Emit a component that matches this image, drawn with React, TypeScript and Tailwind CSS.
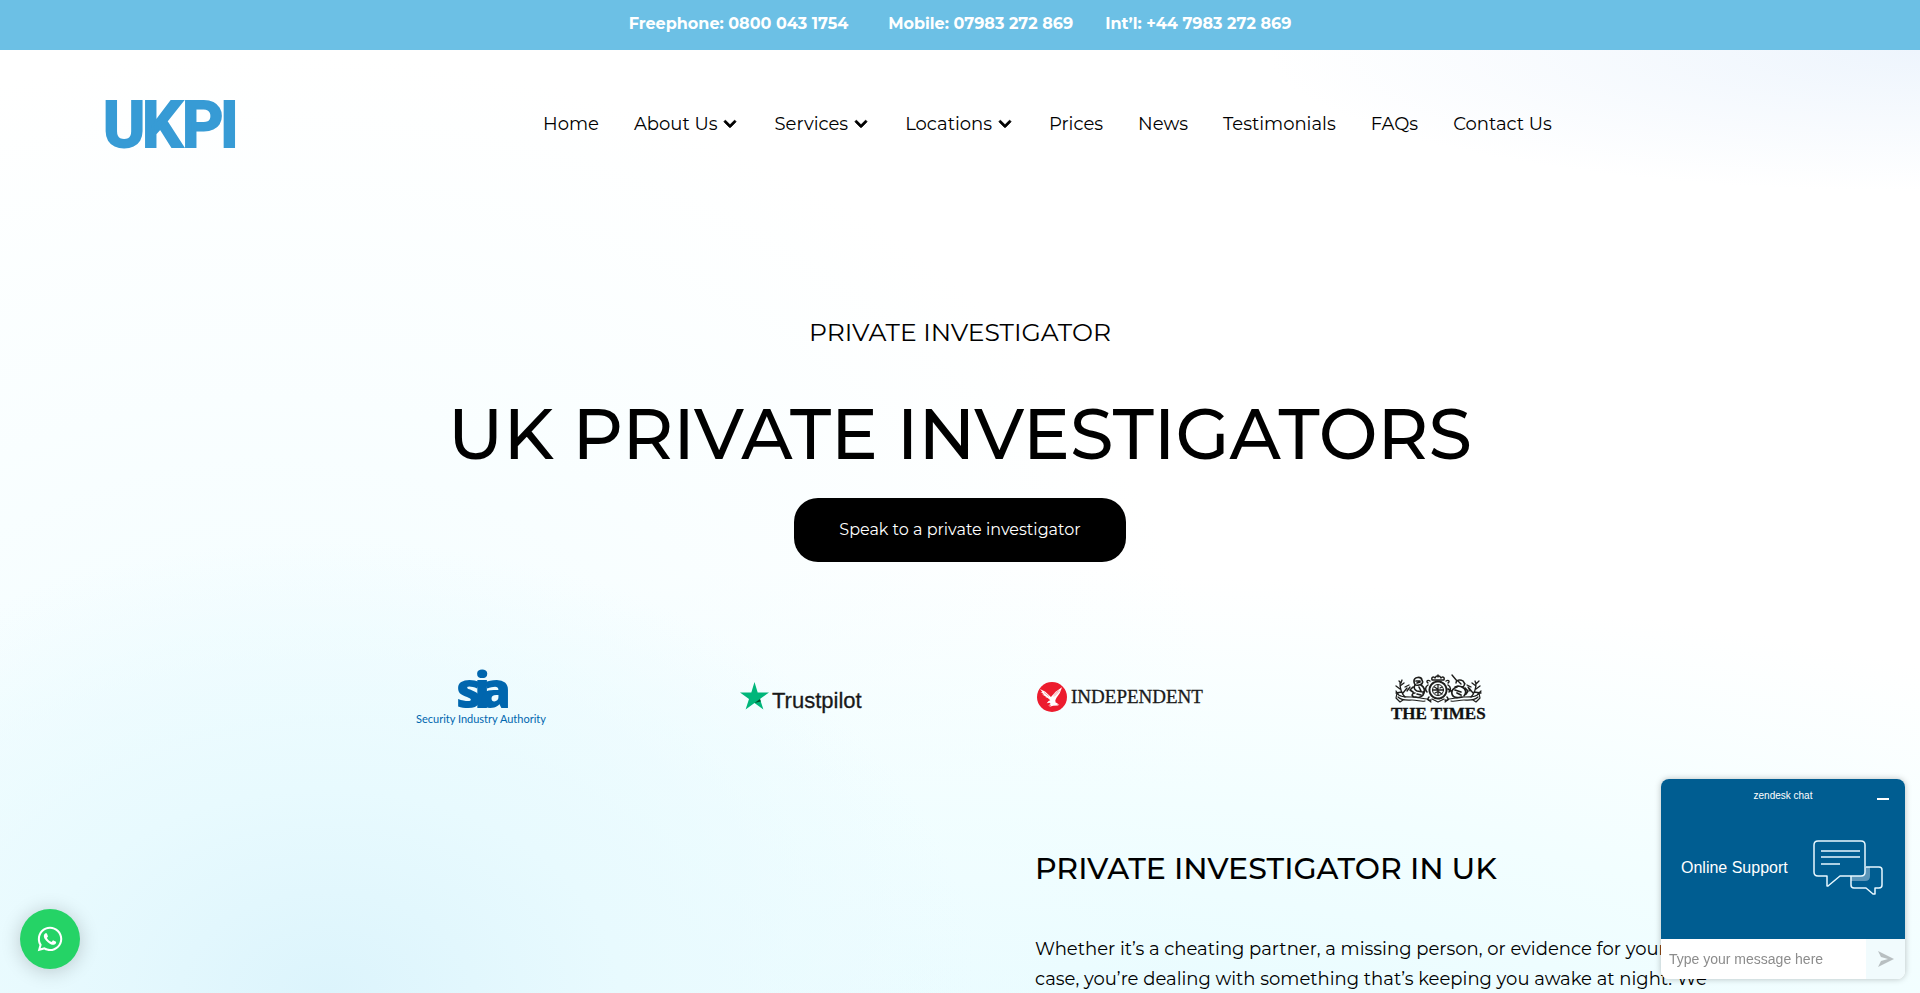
import { FaChevronDown, FaWhatsapp } from "react-icons/fa";

const links = [
  { label: "Home" },
  { label: "About Us", menu: true },
  { label: "Services", menu: true },
  { label: "Locations", menu: true },
  { label: "Prices" },
  { label: "News" },
  { label: "Testimonials" },
  { label: "FAQs" },
  { label: "Contact Us" },
];

function TopBar() {
  return (
    <div className="bg-[#6cc0e5] h-[50px] pb-0.5 flex items-center justify-center gap-8 text-white text-base font-bold">
      <a href="tel:08000431754" className="mr-2">
        Freephone: 0800 043 1754
      </a>
      <a href="tel:07983272869">Mobile: 07983 272 869</a>
      <a href="tel:+447983272869">Int’l: +44 7983 272 869</a>
    </div>
  );
}

function Logo() {
  return (
    <svg width="132" height="52" viewBox="0 0 132 52" className="overflow-visible" role="img" aria-label="UKPI">
      <text
        x="-2 37 77 115"
        y="49"
        fill="#379bd5"
        stroke="#379bd5"
        strokeWidth="2"
        className="font-[Roboto,sans-serif] font-bold text-[64px]"
      >
        UKPI
      </text>
    </svg>
  );
}

function Navigation() {
  return (
    <header className="h-[150px] px-[105px] pb-0.5 flex items-center">
      <a href="#home" className="w-[438px] shrink-0">
        <Logo />
      </a>
      <nav className="flex items-center gap-[35px] text-lg text-black">
        {links.map((link) => (
          <a key={link.label} href="#" className="flex items-center gap-1.5 whitespace-nowrap">
            {link.label}
            {link.menu && <FaChevronDown stroke="currentColor" strokeWidth="30" className="size-3.5 mr-0.5" />}
          </a>
        ))}
      </nav>
    </header>
  );
}

function Hero() {
  return (
    <section className="pt-28 flex flex-col items-center text-black">
      <p className="text-[25px] leading-10">PRIVATE INVESTIGATOR</p>
      <h1 className="mt-[38px] text-[70px] leading-[88px] font-medium whitespace-nowrap">
        UK PRIVATE INVESTIGATORS
      </h1>
      <button className="mt-5 h-16 px-[45px] rounded-3xl bg-black text-white text-base">
        Speak to a private investigator
      </button>
    </section>
  );
}

function SiaLogo() {
  return (
    <svg width="140" height="60" viewBox="0 0 140 60" className="overflow-visible" role="img" aria-label="Security Industry Authority">
      <g fill="#0066ae">
        <text
          x="43 61 67"
          y="41"
          className="font-['Open_Sans',sans-serif] font-extrabold text-[50px]"
        >
          sia
        </text>
        <text x="3" y="56" className="font-[Lato,sans-serif] text-[11px]">
          Security Industry Authority
        </text>
      </g>
    </svg>
  );
}

function TrustpilotLogo() {
  return (
    <svg width="124" height="32" viewBox="0 0 124 32" className="overflow-visible" role="img" aria-label="Trustpilot">
      <path d="M14.500 1l3.200 10.500H29l-9 6.500 3.400 10.500-8.900-6.500-8.900 6.500L9 18l-9-6.500h11.300z" fill="#00b67a" />
      <path d="M20.800 20.500l-.8-2.500-5.500 4z" fill="#005128" />
      <text x="32" y="27" fill="#191919" stroke="#191919" strokeWidth="0.3" className="font-['Liberation_Sans',sans-serif] text-[22px]">
        Trustpilot
      </text>
    </svg>
  );
}

function IndependentLogo() {
  return (
    <svg width="166" height="30" viewBox="0 0 166 30" className="overflow-visible" role="img" aria-label="Independent">
      <circle cx="15" cy="15" r="15" fill="#ec1c2e" />
      <path
        d="M3 7l5 2.500 3.600 3.300 2.300 2.200 1.400-1.600 3.300-3.600L25 5.300l-1.200 3.200-1 2.500-1.700 2.500-1.600 2.200-1.200 2.600.3 2.200 2.600 1-1.600.6 2.700.6-1.500.9-4.700.2-4.100 1.200 2.200-1.800-3.200.3 2.700-1.600-1.300-1.200-2.700.6 1.900-2.300 1.700-.8-2.500-2.200-3-1.200 1.700-.1L5 12.600l2.200-.2L3.600 10l2 .2z"
        fill="#fff"
      />
      <path d="M17 14.500l6-6M16.500 13l5-4.500M7 10.500l5 4" stroke="#ec1c2e" strokeWidth="0.4" />
      <text x="34" y="21" fill="#1a1a1a" stroke="#1a1a1a" strokeWidth="0.3" className="font-['Liberation_Serif',serif] text-[19px]">
        INDEPENDENT
      </text>
    </svg>
  );
}

function TimesLogo() {
  return (
    <svg width="96" height="48" viewBox="0 0 96 48" className="overflow-visible" role="img" aria-label="The Times">
      <g fill="none" stroke="#1d1d1b" strokeLinecap="round" strokeLinejoin="round">
        {/* shield and crown */}
        <circle cx="47" cy="17" r="8.500" strokeWidth="2" strokeDasharray="1.500 0.700" />
        <circle cx="47" cy="17" r="5.500" strokeWidth="1" />
        <path d="M42 17h10M47 12v10M43.500 14l3 2M48 19l3 2M44 20l2-1M49 15l2-1" strokeWidth="1.300" />
        <path d="M41 7c-1-3 2-4 3-2 1-3 5-3 6 0 1-2 4-1 3 2zM47 2v2M39 8c-3-2-4 1-2 2M55 8c3-2 4 1 2 2" strokeWidth="1.400" />
        <path d="M37 12c-3 2-3 5-1 7M57 12c3 2 3 5 1 7M38 24c-2 2-1 4 2 3M56 24c2 2 1 4-2 3" strokeWidth="1.500" />
        {/* lion */}
        <path d="M23 8c0-4 7-5 8-1 2 3-1 5-3 5-4 1-5-1-5-4M25 8h4M26 10l3-1" strokeWidth="1.700" />
        <path d="M24 12c-2 3 0 5 2 6l6 1M30 12c3 2 4 5 3 8-1 4-5 5-9 4M22 14l-3 3 3 2M24 20c-3 0-4 3-1 4M28 14l2 4M34 16l-2 5M26 21l4 1" strokeWidth="1.600" />
        {/* unicorn */}
        <path d="M61 2l5 6M65 10c0-3 4-4 7-2 2 2 2 4 0 6l-5-1-3 1M67 8l3 3M72 8l2 3" strokeWidth="1.400" />
        <path d="M66 14c-4 1-6 4-5 7 1 4 6 4 10 3M71 14c4 2 5 6 2 9M60 18l-3-2M64 17l6 2M74 15l3 3-2 3M66 20l4 2" strokeWidth="1.700" />
        {/* flowers */}
        <path d="M14 24C10 20 9 16 9 10M9 16l-4-3M9 13l4-3M11 19l-6 1M12 20l4-5M8 8l2 2 1-3M14 14l4-2M16 18l3-4M5 18l2 3" strokeWidth="1.300" />
        <path d="M80 24c4-4 5-8 5-14M85 16l4-3M85 13l-4-3M83 19l7 1M82 20l-4-5M84 8l1 3 3-3M80 14l-4-2M79 18l-2-4M90 18l-3 3" strokeWidth="1.300" />
        {/* ribbon */}
        <path d="M6 20c2 4 8 4 14 4 8 0 12 2 16 2M7 24c4 4 10 3 14 3 6 0 9 2 13 1M6 20l-1 5 4 4 3-2M88 20c-2 4-8 4-14 4-8 0-12 2-16 2M87 24c-4 4-10 3-14 3-6 0-9 2-13 1M88 20l1 5-4 4-3-2M41 26l6 3 6-3M36 26l4 3M58 26l-4 3" strokeWidth="1.200" />
      </g>
      <text x="0" y="46" fill="#111" stroke="#111" strokeWidth="0.3" className="font-['Liberation_Serif',serif] font-bold text-[17px]">
        THE TIMES
      </text>
    </svg>
  );
}

function PressLogos() {
  return (
    <section className="mt-[105px] h-[60px] pl-[324px] pr-[322px] grid grid-cols-4 items-center justify-items-center">
      <SiaLogo />
      <TrustpilotLogo />
      <IndependentLogo />
      <TimesLogo />
    </section>
  );
}

function Intro() {
  return (
    <section className="mt-[118px] px-[185px] grid grid-cols-2 gap-[150px] text-black">
      <div />
      <div>
        <h2 className="text-[30px] leading-[48px] font-medium whitespace-nowrap">
          PRIVATE INVESTIGATOR IN UK
        </h2>
        <p className="mt-[41px] text-lg leading-[30px]">
          Whether it’s a cheating partner, a missing person, or evidence for your
          <br />
          case, you’re dealing with something that’s keeping you awake at night. We
        </p>
      </div>
    </section>
  );
}

function ChatWidget() {
  return (
    <aside className="fixed right-[15px] bottom-[14px] w-[244px] rounded-lg overflow-hidden shadow-[0_0_6px_rgba(0,0,0,0.25)] font-['Liberation_Sans',sans-serif]">
      <div className="relative h-40 px-5 pt-[18px] bg-[#005d91] text-white flex items-center justify-between">
        <span className="absolute top-2 inset-x-0 text-center text-[10px] leading-[18px]">zendesk chat</span>
        <button aria-label="Minimise" className="absolute top-2 right-3 w-5 h-6 flex items-center justify-center">
          <span className="w-3 h-0.5 bg-white" />
        </button>
        <span className="text-base">Online Support</span>
        <svg width="70" height="56" viewBox="0 0 70 56" fill="none" stroke="#e8f8ff" strokeWidth="1.500" strokeLinejoin="round" className="mr-0.5">
          <path d="M52 27h5v9q0 5-5 5H38v-5h10q4 0 4-4z" fill="#5a95b9" stroke="none" />
          <path d="M5 1h43q4 0 4 4v27q0 4-4 4H27L15 46h-1V36H5q-4 0-4-4V5q0-4 4-4z" />
          <path d="M8 11h39M8 17h39M8 24h19" />
          <path d="M53 27h13q3 0 3 3v15q0 3-3 3h-4v6h-2l-7-6H41q-3 0-3-3v-9" />
        </svg>
      </div>
      <form className="h-10 flex bg-white">
        <input
          type="text"
          aria-label="Message"
          placeholder="Type your message here"
          className="w-[205px] pl-2 text-sm text-black placeholder:text-[#8c8c8c] outline-none"
        />
        <button type="button" aria-label="Send" className="flex-1 flex items-center justify-center bg-[#f1fbfd]">
          <svg width="16" height="16" viewBox="0 0 16 16" fill="#b8bfc1">
            <path d="M0 0l16 8-16 8 3-6 7-2-7-2z" />
          </svg>
        </button>
      </form>
    </aside>
  );
}

export default function App() {
  return (
    <div className="h-screen overflow-hidden flex flex-col bg-white font-[Montserrat,Inter,sans-serif]">
      <TopBar />
      <main className="flex-1 min-h-0 bg-[radial-gradient(ellipse_34%_15%_at_100%_0%,#eef5fd_0%,transparent_100%),radial-gradient(ellipse_34%_48%_at_17%_100%,#dcf4fc_0%,#e8fafe_45%,transparent_100%),radial-gradient(ellipse_50%_80%_at_14%_80%,#f2fdff_0%,transparent_100%),radial-gradient(ellipse_90%_60%_at_50%_115%,#e2faff_0%,#f2feff_60%,transparent_100%)]">
        <Navigation />
        <Hero />
        <PressLogos />
        <Intro />
      </main>
      <a
        href="#whatsapp"
        aria-label="WhatsApp"
        className="fixed left-5 bottom-6 size-[60px] rounded-full bg-[#25d366] text-white flex items-center justify-center shadow-[0_2px_20px_rgba(0,0,0,0.2)]"
      >
        <FaWhatsapp className="size-7" />
      </a>
      <ChatWidget />
    </div>
  );
}
